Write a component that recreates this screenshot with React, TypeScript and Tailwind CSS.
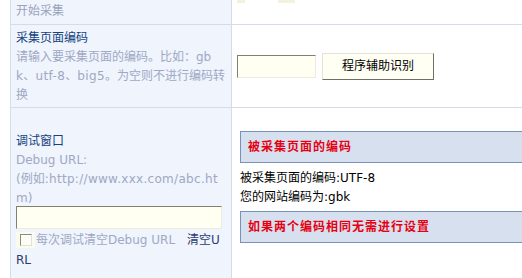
export default function App() {
  return (
    <div className="w-[522px] h-[278px] overflow-hidden bg-white pl-[10px] text-[12px] font-['DejaVu_Sans','Noto_Sans_CJK_SC',sans-serif]">
      <div className="border-l border-[#d5dce8]">
        {/* 开始采集 */}
        <div className="grid grid-cols-[221px_1fr] h-[25px] border-b border-[#d5dce8]">
          <div className="bg-[#eff4fd] border-r border-[#d5dce8] pl-[5px] leading-[22px] text-[#9aa3bb]">开始采集</div>
          <div className="flex items-start pl-[5px]">
            <span className="w-[8px] h-[3px] bg-[#f4f2dc]" />
            <span className="ml-[33px] w-[17px] h-[3px] bg-[#f4f2dc]" />
          </div>
        </div>

        {/* 采集页面编码 */}
        <div className="grid grid-cols-[221px_1fr] h-[83px] border-b border-[#d5dce8]">
          <div className="bg-[#eff4fd] border-r border-[#d5dce8] pl-[5px] pt-[2px] flex flex-col justify-center leading-[19px] whitespace-nowrap">
            <div className="text-[#13427e]">采集页面编码</div>
            <div className="text-[#a0a8c4]">
              请输入要采集页面的编码。比如：gb
              <br />
              <span className="tracking-[0.4px]">k</span>、<span className="tracking-[0.4px]">utf-8</span>、
              <span className="tracking-[0.4px]">big5</span>。为空则不进行编码转
              <br />
              换
            </div>
          </div>
          <div className="flex items-center pl-[5px]">
            <input
              type="text"
              className="w-[79px] h-[23px] bg-[#fffff2] border border-t-[#7f7f72] border-l-[#7f7f72] border-b-[#ecebdc] border-r-[#ecebdc] outline-none"
            />
            <button className="ml-[6px] w-[112px] h-[27px] bg-[#fffff4] border border-t-[#e4e3d4] border-l-[#e4e3d4] border-b-[#6f6f68] border-r-[#6f6f68] text-black text-[12px]">
              程序辅助识别
            </button>
          </div>
        </div>

        {/* 调试窗口 */}
        <div className="grid grid-cols-[221px_1fr] h-[200px]">
          <div className="bg-[#eff4fd] border-r border-[#d5dce8] pl-[5px] pt-[24px] whitespace-nowrap">
            <div className="leading-[19px] text-[#13427e]">调试窗口</div>
            <div className="leading-[19px] text-[#a0a8c4]">
              Debug URL:
              <br />
              (例如<span className="tracking-[0.3px]">:http://www.xxx.com/abc.ht</span>
              <br />
              m)
            </div>
            <input
              type="text"
              className="block -mt-[2px] w-[206px] h-[23px] bg-[#fffff2] border border-t-[#7f7f72] border-l-[#7f7f72] border-b-[#ecebdc] border-r-[#ecebdc] outline-none"
            />
            <div className="flex items-center h-[22px] text-[#a0a8c4]">
              <span className="w-[19px] h-[16px] bg-[#fbfbec] flex items-center justify-center">
                <span className="w-[12px] h-[12px] bg-[#fdfdf6] border border-t-[#8a8a86] border-l-[#8a8a86] border-b-[#e2e2da] border-r-[#e2e2da]" />
              </span>
              <span className="ml-[1px]">每次调试清空Debug URL</span>
              <span className="ml-[12px] text-[#2d3a6e]">清空U</span>
            </div>
            <div className="leading-[19px] text-[#2d3a6e]">RL</div>
          </div>

          <div className="pl-[8px] pt-[23px] text-black">
            <div className="h-[32px] bg-[#d7e0ef] border-t border-b border-l border-[#7892ba] pl-[7px] leading-[30px] font-bold text-[#e60012] tracking-[1px]">
              被采集页面的编码
            </div>
            <div className="mt-[5px] leading-[18px] pt-[1px]">
              <div>被采集页面的编码:UTF-8</div>
              <div className="mt-[1px]">您的网站编码为:gbk</div>
            </div>
            <div className="mt-[5px] h-[32px] bg-[#d7e0ef] border-t border-b border-l border-[#7892ba] pl-[7px] leading-[30px] font-bold text-[#e60012] tracking-[1px]">
              如果两个编码相同无需进行设置
            </div>
          </div>
        </div>
      </div>
    </div>
  );
}
